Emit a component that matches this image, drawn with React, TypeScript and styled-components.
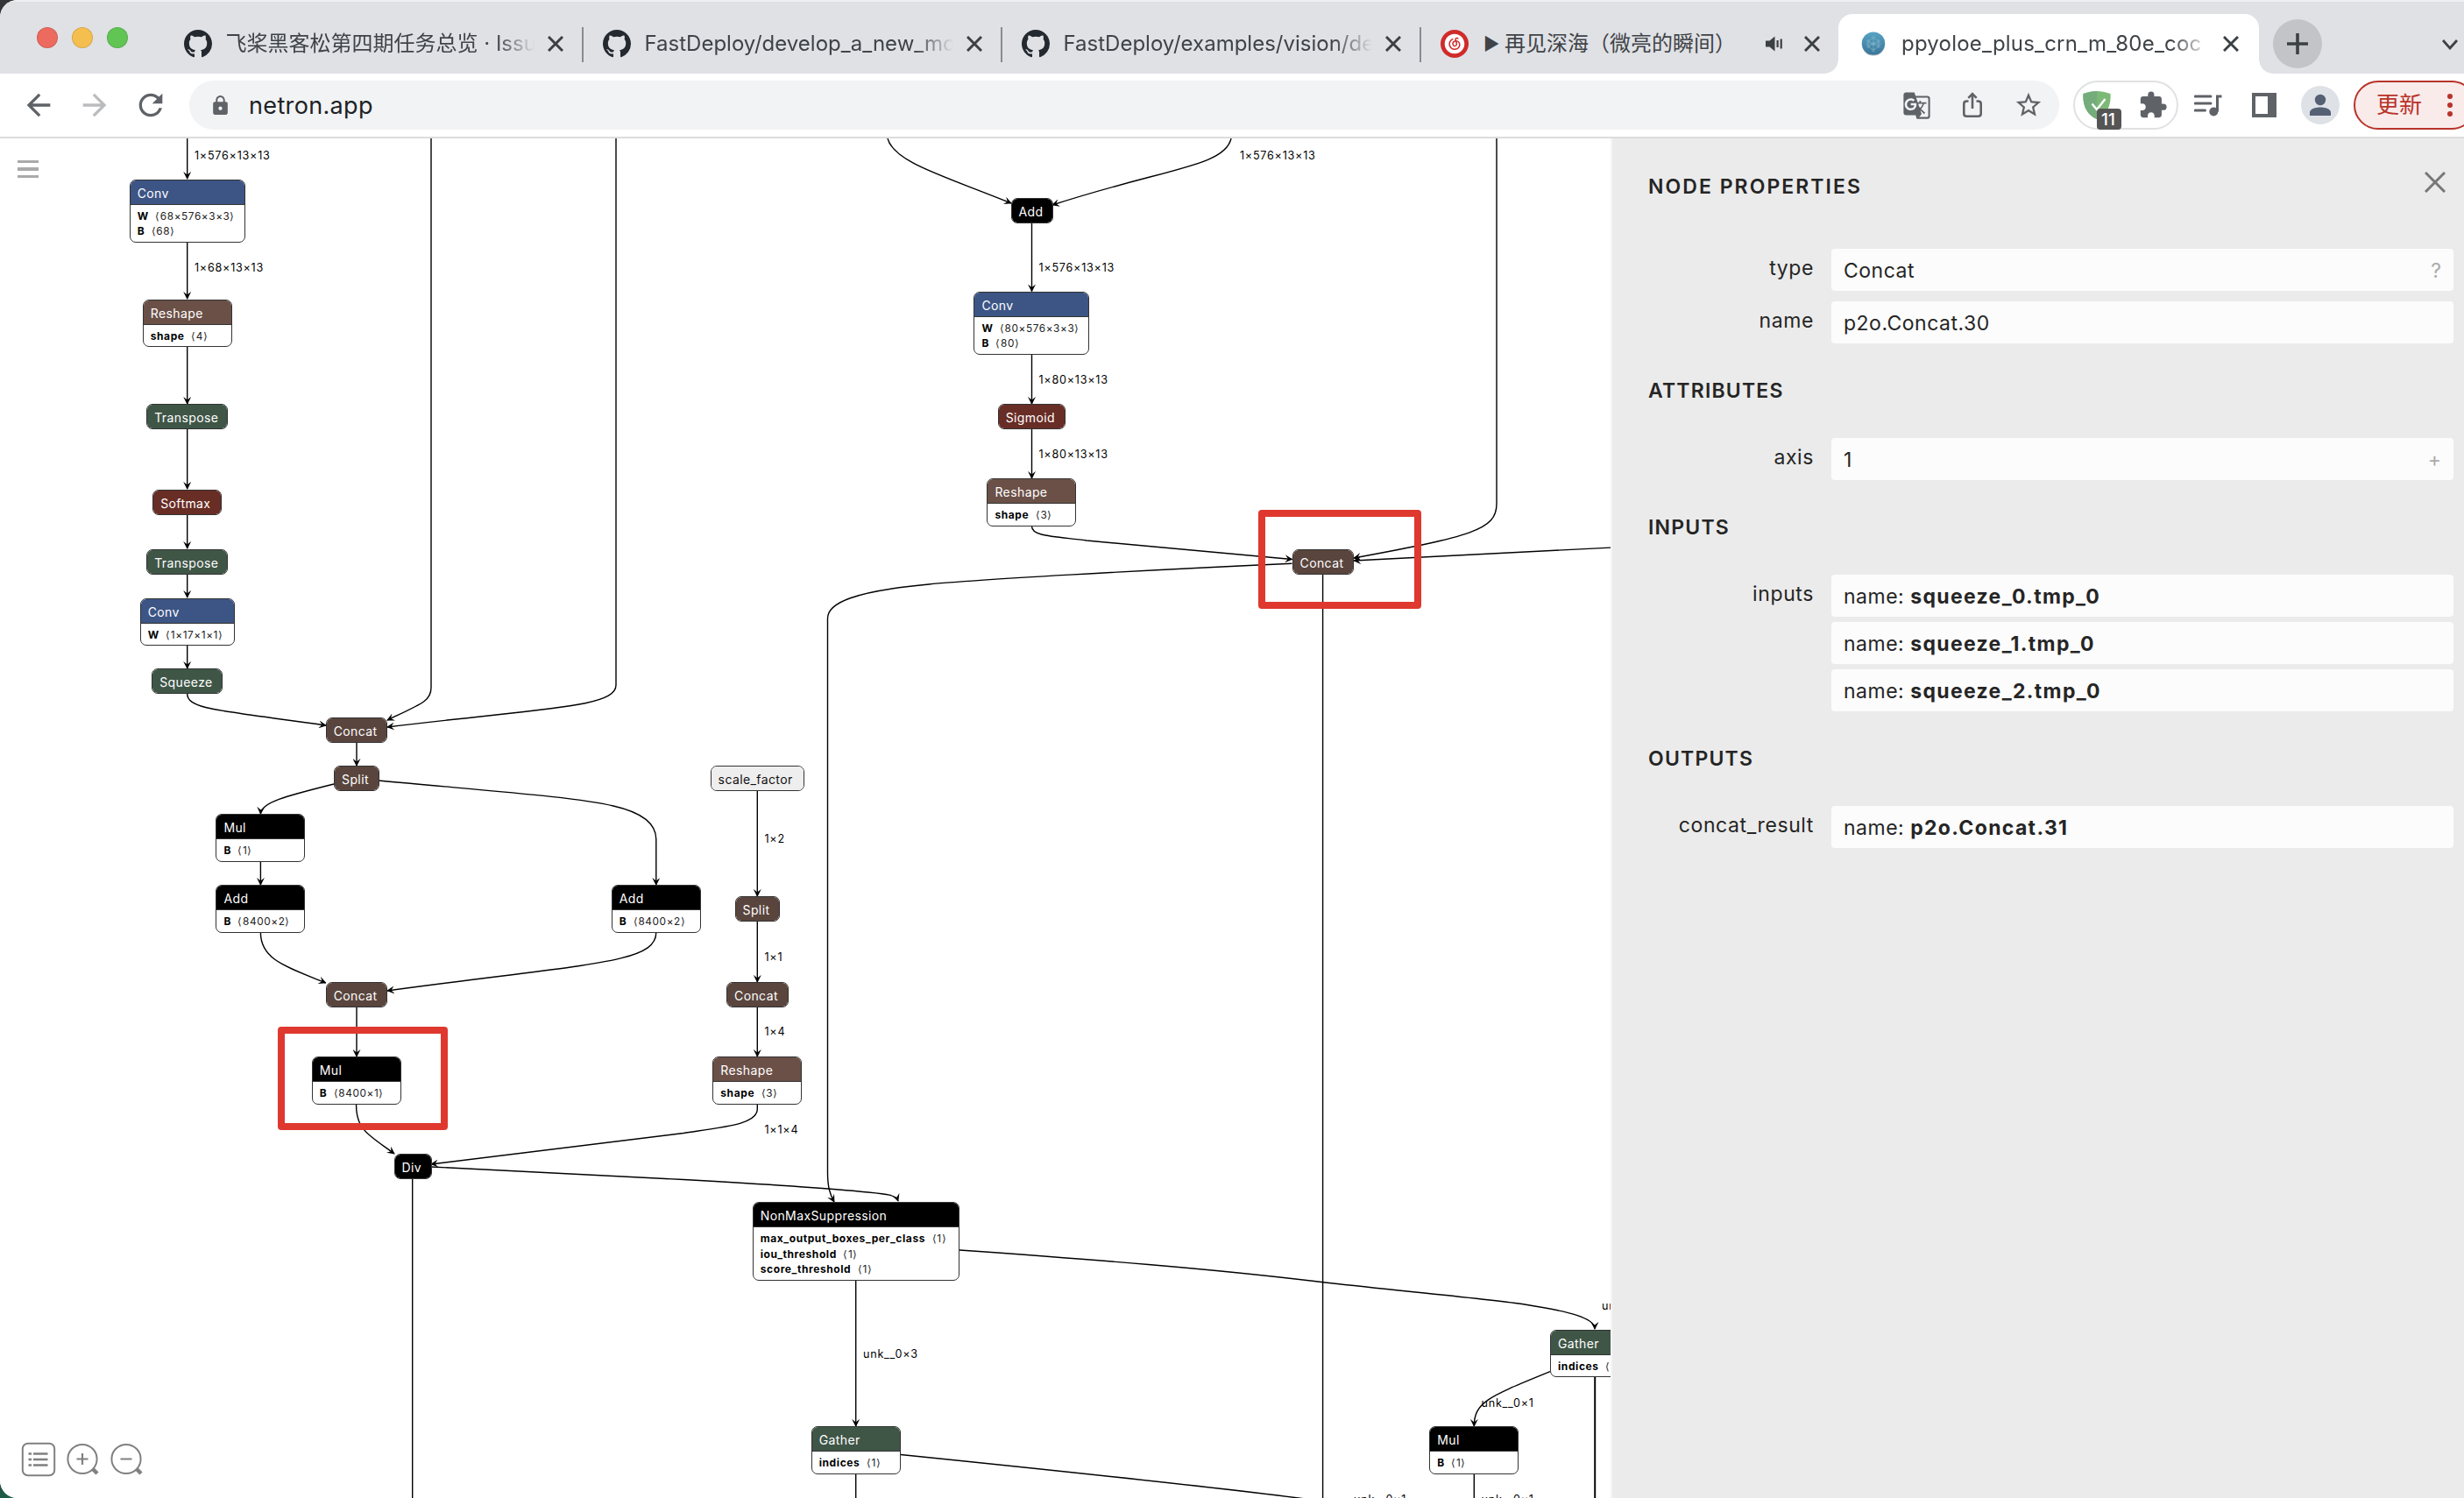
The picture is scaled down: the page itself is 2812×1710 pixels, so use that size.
import React from 'react';
import styled, { createGlobalStyle } from 'styled-components';
import { MdGTranslate, MdExtension, MdStarBorder, MdArrowBack, MdArrowForward, MdRefresh, MdLock } from 'react-icons/md';
import { SiNeteasecloudmusic } from 'react-icons/si';

const GlobalStyle = createGlobalStyle`
  html, body { margin: 0; padding: 0; background: #2b2d2f; }
  * { box-sizing: border-box; }
  body { font-family: Inter, "Noto Sans CJK SC", sans-serif; }
`;

const Desktop = styled.div`
  width: 2812px;
  height: 1710px;
  overflow: hidden;
  background: linear-gradient(#333537 0 1690px, #1f5b45 1704px);
`;
const Window = styled.div`
  display: flex;
  flex-direction: column;
  width: 2812px;
  height: 1710px;
  overflow: hidden;
  background: #fff;
  border-radius: 20px 0 0 20px;
`;

/* Tab strip */
const TabStrip = styled.div`
  display: flex;
  align-items: flex-end;
  height: 84px;
  flex: none;
  background: #dfe1e5;
  border-top: 2px solid #eeeff1;
`;
const Lights = styled.div`
  display: flex;
  gap: 16px;
  width: 188px;
  padding-left: 42px;
  align-self: flex-start;
  padding-top: 29px;
  flex: none;
`;
const Light = styled.span<{ $color: string }>`
  width: 24px;
  height: 24px;
  border-radius: 50%;
  background: ${p => p.$color};
  border: 1px solid rgba(0, 0, 0, 0.12);
`;
const Tab = styled.div<{ $active?: boolean; $last?: boolean }>`
  display: flex;
  align-items: center;
  position: relative;
  flex: none;
  width: ${p => (p.$active ? 480 : p.$last ? 476 : 478)}px;
  height: 68px;
  padding-left: ${p => (p.$active ? 26 : 22)}px;
  padding-right: ${p => (p.$last ? 21 : 23)}px;
  background: ${p => (p.$active ? '#fff' : 'transparent')};
  border-radius: ${p => (p.$active ? '16px 16px 0 0' : 0)};
  &::before, &::after {
    content: '';
    display: ${p => (p.$active ? 'block' : 'none')};
    position: absolute;
    bottom: 0;
    width: 16px;
    height: 16px;
  }
  &::before { left: -16px; background: radial-gradient(circle at 0 0, transparent 15.5px, #fff 16px); }
  &::after { right: -16px; background: radial-gradient(circle at 100% 0, transparent 15.5px, #fff 16px); }
`;
const TabDivider = styled.i`
  position: absolute;
  right: 0;
  top: 15px;
  width: 2px;
  height: 40px;
  background: #888b90;
`;
const TabTitle = styled.span<{ $left: number; $width: number; $fade?: boolean; $spacing?: number }>`
  flex: none;
  width: ${p => p.$width}px;
  margin-left: ${p => p.$left}px;
  white-space: nowrap;
  font-size: 24px;
  line-height: 34px;
  letter-spacing: ${p => p.$spacing ?? 0}px;
  color: #3f4347;
  ${p => p.$fade !== false && 'mask-image: linear-gradient(to right, #000 calc(100% - 44px), transparent);'}
`;
const PlayMark = styled.span`
  display: inline-block;
  width: 24px;
  font-size: 20px;
  vertical-align: 1px;
`;
const TabClose = styled.span`
  display: flex;
  margin-left: auto;
`;
const TabAudio = styled.span`
  display: flex;
  margin-left: 46px;
`;
const NewTab = styled.button`
  display: flex;
  align-items: center;
  justify-content: center;
  width: 56px;
  height: 56px;
  margin: 0 0 6px 16px;
  padding: 0;
  border: 0;
  border-radius: 50%;
  background: #c2c4c8;
`;
const TabSearch = styled.span`
  display: flex;
  margin: 0 7px 27px auto;
`;

/* Toolbar */
const Toolbar = styled.div`
  display: flex;
  align-items: center;
  flex: none;
  height: 74px;
  border-bottom: 2px solid #dcdcdc;
  color: #5f6368;
`;
const NavButtons = styled.div`
  display: flex;
  align-items: center;
  width: 216px;
  padding-left: 24px;
  gap: 24px;
  flex: none;
`;
const NavIcon = styled.span<{ $dim?: boolean }>`
  display: flex;
  font-size: 40px;
  color: ${p => (p.$dim ? '#babcbe' : '#5f6368')};
`;
const AddressBar = styled.div`
  display: flex;
  align-items: center;
  width: 2134px;
  height: 56px;
  padding: 0 18.5px 0 23px;
  border-radius: 28px;
  background: #f1f3f4;
  flex: none;
`;
const Url = styled.span`
  margin-left: 20px;
  padding-top: 2px;
  flex: 1;
  font-size: 27px;
  line-height: 40px;
  letter-spacing: 0.35px;
  color: #202124;
`;
const BarIcons = styled.div`
  display: flex;
  align-items: center;
  gap: 35px;
`;
const ExtensionPill = styled.div`
  display: flex;
  align-items: center;
  position: relative;
  width: 120px;
  height: 56px;
  margin-left: 16px;
  padding-left: 9px;
  border: 2px solid #dfe1e3;
  border-radius: 28px;
  flex: none;
`;
const Badge = styled.span`
  position: absolute;
  left: 25px;
  top: 30px;
  width: 28px;
  height: 24px;
  padding-left: 5px;
  border-radius: 4px;
  background: #555;
  color: #fff;
  font-size: 19px;
  font-weight: 500;
  line-height: 26px;
`;
const PuzzleSlot = styled.span`
  display: flex;
  margin-left: 31px;
  font-size: 34px;
`;
const ToolSlot = styled.span<{ $left: number }>`
  display: flex;
  flex: none;
  margin-left: ${p => p.$left}px;
`;
const Avatar = styled.span`
  display: flex;
  align-items: center;
  justify-content: center;
  width: 44px;
  height: 44px;
  margin-left: 28px;
  border-radius: 50%;
  background: #dee1e6;
  flex: none;
`;
const Update = styled.div`
  display: flex;
  align-items: center;
  width: 140px;
  height: 56px;
  margin-left: 16px;
  padding-left: 24px;
  border: 2px solid #b8332a;
  border-radius: 28px;
  background: #f9ebea;
  color: #b8332a;
  font-size: 26px;
  line-height: 36px;
  flex: none;
`;
const Dots = styled.span`
  display: flex;
  flex-direction: column;
  gap: 4px;
  margin-left: 29px;
  & > i { width: 6px; height: 6px; border-radius: 50%; background: #b8332a; }
`;

/* Page */
const Page = styled.div`
  display: flex;
  flex: 1;
  min-height: 0;
`;
const Canvas = styled.div`
  position: relative;
  width: 1838px;
  height: 1552px;
  overflow: hidden;
  background: #fff;
  flex: none;
`;
const Edges = styled.svg`
  position: absolute;
  left: 0;
  top: 0;
`;
const NodeBox = styled.div<{ $x: number; $y: number; $w: number; $h: number }>`
  position: absolute;
  left: ${p => p.$x}px;
  top: ${p => p.$y - 158}px;
  width: ${p => p.$w}px;
  height: ${p => p.$h}px;
  border: 1.4px solid #333;
  border-radius: 7px;
  overflow: hidden;
  background: #fff;
`;
const NodeTitle = styled.div<{ $color: string; $dark?: boolean; $single: boolean }>`
  height: 28px;
  padding: 1px 0 0 8px;
  font-size: 14px;
  line-height: 27px;
  letter-spacing: 0.4px;
  white-space: nowrap;
  color: ${p => (p.$dark ? '#111' : '#fff')};
  background: ${p => p.$color};
  border-bottom: ${p => (p.$single ? 0 : '1.4px solid #333')};
`;
const NodeBody = styled.div`
  padding: 4px 0 0 8px;
`;
const NodeItem = styled.div`
  height: 17.6px;
  font-size: 12px;
  line-height: 17.6px;
  letter-spacing: 0.6px;
  white-space: nowrap;
  color: #000;
`;
const ItemValue = styled.span`
  margin-left: 7.5px;
  font-size: 11.8px;
  color: #222;
`;
const EdgeLabel = styled.span<{ $x: number; $y: number }>`
  position: absolute;
  left: ${p => p.$x}px;
  top: ${p => p.$y - 166}px;
  font-size: 12.6px;
  line-height: 16px;
  letter-spacing: 0.75px;
  white-space: nowrap;
  color: #000;
`;
const Highlight = styled.div<{ $x: number; $y: number; $w: number; $h: number }>`
  position: absolute;
  left: ${p => p.$x}px;
  top: ${p => p.$y - 158}px;
  width: ${p => p.$w}px;
  height: ${p => p.$h}px;
  border: 8px solid #df382f;
  border-radius: 4px;
`;
const MenuButton = styled.div`
  position: absolute;
  left: 20px;
  top: 24.5px;
  display: flex;
  flex-direction: column;
  gap: 5px;
  & > i { width: 24px; height: 3.5px; background: #aaa; }
`;
const CanvasTools = styled.div`
  position: absolute;
  left: 24px;
  bottom: 24px;
  display: flex;
  gap: 12px;
`;

/* Sidebar */
const Sidebar = styled.aside`
  display: flex;
  flex-direction: column;
  flex: 1;
  padding: 36px 12px 0 41px;
  border-left: 2px solid #f5f5f5;
  background: #ebebeb;
  color: #252525;
`;
const SidebarHead = styled.div`
  display: flex;
  justify-content: space-between;
  height: 90px;
  padding-right: 9px;
`;
const CloseSlot = styled.span`
  display: flex;
  padding-top: 2px;
`;
const Heading = styled.h2<{ $gap?: boolean }>`
  margin: ${p => (p.$gap ? '35px 0 37px' : '0')};
  height: 36px;
  padding-top: 1px;
  font-size: 23px;
  font-weight: 600;
  line-height: 36px;
  letter-spacing: ${p => (p.$gap ? 1.2 : 2.05)}px;
  color: #252525;
`;
const Property = styled.div`
  display: flex;
  & + & { margin-top: 12px; }
`;
const PropertyName = styled.div`
  width: 189px;
  flex: none;
  margin-right: 20px;
  text-align: right;
  font-size: 23px;
  line-height: 45px;
  letter-spacing: 0.6px;
`;
const Values = styled.div`
  display: flex;
  flex-direction: column;
  flex: 1;
  gap: 6px;
`;
const Value = styled.div`
  display: flex;
  align-items: center;
  height: 48px;
  padding: 1px 14px 0 14px;
  border-radius: 4px;
  background: #fcfcfc;
  font-size: 23px;
  letter-spacing: 0.5px;
  white-space: pre;
  & > b { font-weight: 650; letter-spacing: 1.35px; }
`;
const ValueAction = styled.span`
  margin-left: auto;
  font-size: 23px;
  line-height: 30px;
  letter-spacing: 0;
  color: #aaa;
`;

const BLUE = '#3c5585';
const RESHAPE = '#6b5047';
const BROWN = '#59453d';
const GREEN = '#3f5647';
const RED = '#682d25';

type GraphNode = { x: number; y: number; w: number; t: string; c: string; items?: [string, string][] };

const nodes: GraphNode[] = [
  { x: 147.7, y: 204.5, w: 132, t: 'Conv', c: BLUE, items: [['W', '68×576×3×3'], ['B', '68']] },
  { x: 162.7, y: 341.5, w: 102, t: 'Reshape', c: RESHAPE, items: [['shape', '4']] },
  { x: 167.2, y: 461, w: 93, t: 'Transpose', c: GREEN },
  { x: 174.2, y: 558.7, w: 79, t: 'Softmax', c: RED },
  { x: 167.2, y: 626.8, w: 93, t: 'Transpose', c: GREEN },
  { x: 159.7, y: 682.5, w: 108, t: 'Conv', c: BLUE, items: [['W', '1×17×1×1']] },
  { x: 173.2, y: 763.2, w: 81, t: 'Squeeze', c: GREEN },
  { x: 371.7, y: 818.6, w: 70.5, t: 'Concat', c: BROWN },
  { x: 381, y: 874.3, w: 51.7, t: 'Split', c: BROWN },
  { x: 246.4, y: 929.3, w: 102, t: 'Mul', c: '#000', items: [['B', '1']] },
  { x: 246.4, y: 1010.4, w: 102, t: 'Add', c: '#000', items: [['B', '8400×2']] },
  { x: 697.8, y: 1010.4, w: 102, t: 'Add', c: '#000', items: [['B', '8400×2']] },
  { x: 810.6, y: 874.3, w: 107.4, t: 'scale_factor', c: '#eee' },
  { x: 838.5, y: 1023.2, w: 51.7, t: 'Split', c: BROWN },
  { x: 829, y: 1121, w: 70.5, t: 'Concat', c: BROWN },
  { x: 813.3, y: 1206, w: 102, t: 'Reshape', c: RESHAPE, items: [['shape', '3']] },
  { x: 371.7, y: 1121, w: 70.5, t: 'Concat', c: BROWN },
  { x: 355.7, y: 1206, w: 102, t: 'Mul', c: '#000', items: [['B', '8400×1']] },
  { x: 449.5, y: 1316.6, w: 43, t: 'Div', c: '#000' },
  { x: 858.7, y: 1372.2, w: 236.3, t: 'NonMaxSuppression', c: '#000', items: [['max_output_boxes_per_class', '1'], ['iou_threshold', '1'], ['score_threshold', '1']] },
  { x: 925.7, y: 1628.4, w: 102, t: 'Gather', c: GREEN, items: [['indices', '1']] },
  { x: 1153.5, y: 226, w: 48, t: 'Add', c: '#000' },
  { x: 1111.4, y: 332.9, w: 132, t: 'Conv', c: BLUE, items: [['W', '80×576×3×3'], ['B', '80']] },
  { x: 1138.7, y: 460.8, w: 77.5, t: 'Sigmoid', c: RED },
  { x: 1126.4, y: 546, w: 102, t: 'Reshape', c: RESHAPE, items: [['shape', '3']] },
  { x: 1474.5, y: 626.8, w: 70.5, t: 'Concat', c: BROWN },
  { x: 1769, y: 1517.5, w: 102, t: 'Gather', c: GREEN, items: [['indices', '1']] },
  { x: 1631.3, y: 1628.4, w: 102, t: 'Mul', c: '#000', items: [['B', '1']] },
];

const arrows = [
  'M213.7 158V204', 'M213.7 277V341', 'M213.7 396V461', 'M213.7 490V558', 'M213.7 588V626', 'M213.7 656V682', 'M213.7 737V763',
  'M213.7 792C213.7 810 252 811 372 828',
  'M492 158V785C492 800 482 803 442 822',
  'M703 158V782C703 808 620 808 442 830',
  'M407 847V874',
  'M381 895C325 909 298 916 297.4 929',
  'M432 891C560 903 660 910 700 920C735 928 748.8 942 748.8 958V1010',
  'M297.4 984V1010',
  'M297.4 1064.6C297.4 1095 325 1103 371.7 1122',
  'M748.8 1064.6C748.8 1100 670 1100 442 1131',
  'M407 1150V1206',
  'M406.5 1260.7C406.5 1290 420 1295 450 1317',
  'M864.3 1260.5V1266C864.3 1283 830 1286 780 1293.5L492 1329',
  'M492 1332L780 1346.5C860 1351 930 1355 980 1360C1010 1363 1022 1363 1025 1371',
  'M864.3 903V1023', 'M864.3 1052V1121', 'M864.3 1150V1206',
  'M1474.5 643.2C1300 651 1110 662 1060 667C975 675 944.5 688 944.5 706V1338C944.5 1355 947 1363 952 1372',
  'M1177.5 600.7C1177.5 612 1200 612 1240 617L1474.5 638.5',
  'M1708 158V575C1708 605 1680 612 1545 637',
  'M1840 625L1545 640',
  'M1013 158C1020 185 1075 200 1154 232',
  'M1405 158C1398 190 1330 192 1201 234',
  'M1177.5 255V332.5', 'M1177.5 405V461', 'M1177.5 490V546',
  'M976.7 1461V1628',
  'M1095 1427C1250 1438 1380 1448 1500 1462.5C1600 1474 1700 1483 1740 1489C1790 1497 1820 1504 1820 1517',
  'M1769 1565.7C1700 1594 1682.3 1600 1682.3 1628',
];
const lines = [
  'M470.7 1345V1712', 'M1509.6 655V1712', 'M976.7 1683V1712',
  'M1028 1660.5C1180 1676 1380 1697 1490 1711',
  'M1820 1572V1712', 'M1820.5 1572V1712', 'M1682.3 1683V1712',
];

const labels: [number, number, string][] = [
  [222, 177.5, '1×576×13×13'],
  [222, 305.7, '1×68×13×13'],
  [872.5, 957.5, '1×2'],
  [872.5, 1093.2, '1×1'],
  [872.5, 1178.3, '1×4'],
  [872.5, 1289.5, '1×1×4'],
  [985, 1545.5, 'unk__0×3'],
  [1415, 177.5, '1×576×13×13'],
  [1185.5, 305.7, '1×576×13×13'],
  [1185.5, 433.5, '1×80×13×13'],
  [1185.5, 518.5, '1×80×13×13'],
  [1828, 1490.7, 'unk__0×1'],
  [1690.5, 1601.7, 'unk__0×1'],
  [1545, 1711.5, 'unk__0×1'],
  [1690.5, 1711.5, 'unk__0×1'],
];

const GithubMark = () => (
  <svg width="32" height="32" viewBox="0 0 16 16" fill="#24292f">
    <path d="M8 0C3.58 0 0 3.58 0 8c0 3.54 2.29 6.53 5.47 7.59.4.07.55-.17.55-.38 0-.19-.01-.82-.01-1.49-2.01.37-2.53-.49-2.69-.94-.09-.23-.48-.94-.82-1.13-.28-.15-.68-.52-.01-.53.63-.01 1.08.58 1.23.82.72 1.21 1.87.87 2.33.66.07-.52.28-.87.51-1.07-1.78-.2-3.64-.89-3.64-3.95 0-.87.31-1.59.82-2.15-.08-.2-.36-1.02.08-2.12 0 0 .67-.21 2.2.82.64-.18 1.32-.27 2-.27.68 0 1.36.09 2 .27 1.53-1.04 2.2-.82 2.2-.82.44 1.1.16 1.92.08 2.12.51.56.82 1.27.82 2.15 0 3.07-1.87 3.75-3.65 3.95.29.25.54.73.54 1.48 0 1.07-.01 1.93-.01 2.2 0 .21.15.46.55.38A8.013 8.013 0 0016 8c0-4.42-3.58-8-8-8z" />
  </svg>
);

const MusicMark = styled.span`
  display: flex;
  align-items: center;
  justify-content: center;
  width: 32px;
  height: 32px;
  border-radius: 50%;
  background: #d02b2b;
  color: #fff;
  overflow: hidden;
`;

const NetronMark = () => (
  <svg width="28" height="28" viewBox="0 0 28 28">
    <defs>
      <linearGradient id="globe" x1="0" y1="0" x2="0" y2="1">
        <stop offset="0" stopColor="#56a3c4" />
        <stop offset="1" stopColor="#3b7698" />
      </linearGradient>
    </defs>
    <circle cx="14" cy="14.6" r="13.2" fill="#c5cdd2" />
    <circle cx="14" cy="13.6" r="13.2" fill="url(#globe)" />
    <g stroke="#85b6cb" strokeWidth="0.6" fill="none">
      <path d="M14 7L8 11L8 17L14 21L20 17L20 11ZM8 11L14 14L20 11M8 17L14 14L20 17M14 7V21M5 14H23" />
      <circle cx="14" cy="6.5" r="1.4" /><circle cx="14" cy="14" r="1.6" /><circle cx="14" cy="21.5" r="1.4" />
      <circle cx="8" cy="11" r="1.3" /><circle cx="20" cy="11" r="1.3" /><circle cx="8" cy="17" r="1.3" /><circle cx="20" cy="17" r="1.3" />
    </g>
  </svg>
);

/* White swirl drawn on the red music badge */
const SwirlIcon = styled(SiNeteasecloudmusic)`
  width: 32px;
  height: 32px;
  color: #fff;
`;

const Cross = ({ size = 18, width = 3, color = '#3c4043' }: { size?: number; width?: number; color?: string }) => (
  <svg width={size} height={size} viewBox={`0 0 ${size} ${size}`} stroke={color} strokeWidth={width} fill="none">
    <path d={`M1 1L${size - 1} ${size - 1}M${size - 1} 1L1 ${size - 1}`} />
  </svg>
);

const SpeakerIcon = () => (
  <svg width="20" height="18" viewBox="0 0 20 18" fill="#3c4043">
    <path d="M0 5.5H4.5L10.5 0.5V17.5L4.5 12.5H0Z" />
    <rect x="12.5" y="5" width="2.2" height="8" />
    <rect x="16.6" y="3.5" width="2.2" height="11" />
  </svg>
);

const ShareIcon = () => (
  <svg width="24" height="30" viewBox="0 0 24 30" fill="none" stroke="#5f6368" strokeWidth="2.6">
    <path d="M7.5 10.500H5.300Q2.300 10.500 2.300 13.500V24.700Q2.300 27.700 5.300 27.700H18.700Q21.700 27.700 21.700 24.700V13.500Q21.700 10.500 18.700 10.500H16.500" />
    <path d="M12 19V2.500M7.300 6.900L12 2.200L16.700 6.900" />
  </svg>
);

const ShieldIcon = () => (
  <svg width="32" height="34" viewBox="0 0 32 34">
    <path d="M16 1C20 1 26 2 31.500 4C32.500 18 27 28 16 33C5 28-.5 18 .5 4C6 2 12 1 16 1Z" fill="#7cb976" />
    <path d="M16 1C12 1 6 2 .5 4C-.5 18 5 28 16 33Z" fill="#74ad7b" />
    <path d="M10.500 15.500L16 22L25.500 10" fill="none" stroke="#fff" strokeWidth="2.400" />
  </svg>
);

const PlaylistIcon = () => (
  <svg width="32" height="26" viewBox="0 0 32 26" fill="none" stroke="#5f6368" strokeWidth="3">
    <path d="M1.300 3H19M1.300 11H19M1.300 19H12.500" strokeLinecap="round" />
    <path d="M26.500 20.500V3H31.500" />
    <circle cx="22.300" cy="20.500" r="5" fill="#5f6368" stroke="none" />
  </svg>
);

const SidePanelIcon = () => (
  <svg width="28" height="28" viewBox="0 0 28 28">
    <path fillRule="evenodd" fill="#5f6368" d="M0 0H28V28H0ZM4 4V24H18V4Z" />
  </svg>
);

const PersonIcon = () => (
  <svg width="26" height="28" viewBox="0 0 26 28" fill="#566074">
    <circle cx="13" cy="8" r="6.2" />
    <path d="M1 26V22.500C1 18.500 7 16.500 13 16.500S25 18.500 25 22.500V26Z" />
  </svg>
);

const ListIcon = () => (
  <svg width="40" height="40" viewBox="0 0 40 40" fill="none" stroke="#808080" strokeWidth="2">
    <rect x="1.8" y="1.800" width="36.400" height="36.400" rx="6" />
    <path d="M14 13.500H30.500M14 20H30.500M14 26.500H30.500M8.500 13.500H12M8.500 20H12M8.500 26.500H12" strokeWidth="2.400" />
  </svg>
);

const MagnifierIcon = ({ plus }: { plus?: boolean }) => (
  <svg width="38" height="40" viewBox="0 0 38 40" fill="none" stroke="#808080" strokeWidth="2">
    <circle cx="18" cy="19.500" r="16.600" />
    <path d={plus ? 'M11.500 19.500H24.500M18 13V26' : 'M11.500 19.500H24.500'} strokeWidth="2.200" />
    <path d="M30 31L35 36" strokeWidth="4.500" />
  </svg>
);

const Node = ({ n }: { n: GraphNode }) => (
  <NodeBox $x={n.x} $y={n.y} $w={n.w} $h={n.items ? 37.1 + 17.6 * n.items.length : 29}>
    <NodeTitle $color={n.c} $dark={n.c === '#eee'} $single={!n.items}>{n.t}</NodeTitle>
    {n.items && (
      <NodeBody>
        {n.items.map(([k, v]) => (
          <NodeItem key={k}><b>{k}</b><ItemValue>⟨{v}⟩</ItemValue></NodeItem>
        ))}
      </NodeBody>
    )}
  </NodeBox>
);

export default function App() {
  return (
    <>
      <GlobalStyle />
      <Desktop>
        <Window>
          <TabStrip>
            <Lights>
              <Light $color="#ed6a5f" /><Light $color="#f5bf4f" /><Light $color="#61c554" />
            </Lights>
            <Tab>
              <GithubMark />
              <TabTitle $left={15.5} $width={352}>飞桨黑客松第四期任务总览 · Issu</TabTitle>
              <TabClose><Cross /></TabClose>
              <TabDivider />
            </Tab>
            <Tab>
              <GithubMark />
              <TabTitle $left={15.5} $width={352}>FastDeploy/develop_a_new_mo</TabTitle>
              <TabClose><Cross /></TabClose>
              <TabDivider />
            </Tab>
            <Tab>
              <GithubMark />
              <TabTitle $left={15.5} $width={352}>FastDeploy/examples/vision/det</TabTitle>
              <TabClose><Cross /></TabClose>
              <TabDivider />
            </Tab>
            <Tab $last>
              <MusicMark><SwirlIcon viewBox="-5 -5 34 34" /></MusicMark>
              <TabTitle $left={17} $width={276} $fade={false}><PlayMark>▶</PlayMark>再见深海（微亮的瞬间）</TabTitle>
              <TabAudio><SpeakerIcon /></TabAudio>
              <TabClose><Cross /></TabClose>
            </Tab>
            <Tab $active>
              <NetronMark />
              <TabTitle $left={18} $width={352} $spacing={0.2}>ppyoloe_plus_crn_m_80e_coc</TabTitle>
              <TabClose><Cross /></TabClose>
            </Tab>
            <NewTab>
              <svg width="26" height="26" viewBox="0 0 26 26" stroke="#3c4043" strokeWidth="3.600"><path d="M13 1V25M1 13H25" /></svg>
            </NewTab>
            <TabSearch>
              <svg width="18" height="12" viewBox="0 0 18 12" fill="none" stroke="#3c4043" strokeWidth="2.800"><path d="M1 1L9 10L17 1" /></svg>
            </TabSearch>
          </TabStrip>

          <Toolbar>
            <NavButtons>
              <NavIcon><MdArrowBack /></NavIcon>
              <NavIcon $dim><MdArrowForward /></NavIcon>
              <NavIcon><MdRefresh /></NavIcon>
            </NavButtons>
            <AddressBar>
              <MdLock size={25} />
              <Url>netron.app</Url>
              <BarIcons>
                <MdGTranslate size={33} />
                <ShareIcon />
                <MdStarBorder size={34} />
              </BarIcons>
            </AddressBar>
            <ExtensionPill>
              <ShieldIcon />
              <Badge>11</Badge>
              <PuzzleSlot><MdExtension /></PuzzleSlot>
            </ExtensionPill>
            <ToolSlot $left={18}><PlaylistIcon /></ToolSlot>
            <ToolSlot $left={34}><SidePanelIcon /></ToolSlot>
            <Avatar><PersonIcon /></Avatar>
            <Update>更新<Dots><i /><i /><i /></Dots></Update>
          </Toolbar>

          <Page>
            <Canvas>
              <Edges width="1838" height="1552" viewBox="0 158 1838 1552" fill="none" stroke="#000" strokeWidth="1.4">
                <defs>
                  <marker id="vee" viewBox="0 0 10 10" refX="9" refY="5" markerUnits="userSpaceOnUse" markerWidth="9" markerHeight="9" orient="auto">
                    <path d="M0 0L10 5L0 10L4 5Z" fill="#000" stroke="none" />
                  </marker>
                </defs>
                {arrows.map(d => <path key={d} d={d} markerEnd="url(#vee)" />)}
                {lines.map(d => <path key={d} d={d} />)}
              </Edges>
              {labels.map(([x, y, t]) => <EdgeLabel key={`${x}-${y}`} $x={x} $y={y}>{t}</EdgeLabel>)}
              {nodes.map(n => <Node key={`${n.x}-${n.y}`} n={n} />)}
              <Highlight $x={316.500} $y={1171.500} $w={194.500} $h={118} />
              <Highlight $x={1435.500} $y={582} $w={186} $h={112.500} />
              <MenuButton><i /><i /><i /></MenuButton>
              <CanvasTools><ListIcon /><MagnifierIcon plus /><MagnifierIcon /></CanvasTools>
            </Canvas>

            <Sidebar>
              <SidebarHead>
                <Heading>NODE PROPERTIES</Heading>
                <CloseSlot><Cross size={24} width={3} color="#777" /></CloseSlot>
              </SidebarHead>
              <Property>
                <PropertyName>type</PropertyName>
                <Values><Value>Concat<ValueAction>?</ValueAction></Value></Values>
              </Property>
              <Property>
                <PropertyName>name</PropertyName>
                <Values><Value>p2o.Concat.30</Value></Values>
              </Property>
              <Heading $gap>ATTRIBUTES</Heading>
              <Property>
                <PropertyName>axis</PropertyName>
                <Values><Value>1<ValueAction>+</ValueAction></Value></Values>
              </Property>
              <Heading $gap>INPUTS</Heading>
              <Property>
                <PropertyName>inputs</PropertyName>
                <Values>
                  <Value>name: <b>squeeze_0.tmp_0</b></Value>
                  <Value>name: <b>squeeze_1.tmp_0</b></Value>
                  <Value>name: <b>squeeze_2.tmp_0</b></Value>
                </Values>
              </Property>
              <Heading $gap>OUTPUTS</Heading>
              <Property>
                <PropertyName>concat_result</PropertyName>
                <Values><Value>name: <b>p2o.Concat.31</b></Value></Values>
              </Property>
            </Sidebar>
          </Page>
        </Window>
      </Desktop>
    </>
  );
}
